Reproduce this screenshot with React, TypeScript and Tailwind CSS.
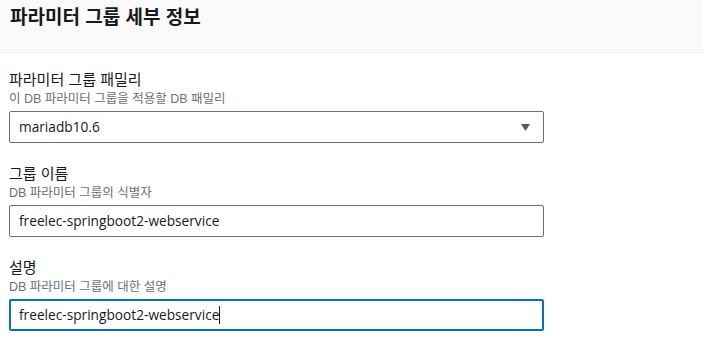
const font = "font-['Liberation_Sans','Noto_Sans_CJK_KR',sans-serif]";
const valueFont = "font-['Open_Sans','Noto_Sans_CJK_KR',sans-serif] text-[13.7px]";

function Field({
  label,
  hint,
  children,
}: {
  label: string;
  hint: string;
  children: React.ReactNode;
}) {
  return (
    <div className="flex flex-col">
      <div className="h-[22px] text-[15px] leading-[22px] text-[#16191f]">{label}</div>
      <div className="h-[16px] text-[12.5px] leading-[16px] text-[#687078]">{hint}</div>
      <div className="mt-[4px]">{children}</div>
    </div>
  );
}

export default function App() {
  return (
    <div className={`${font} h-[340px] w-[703px] overflow-hidden bg-white`}>
      <div className="h-[53px] border-b border-[#eaeded] bg-[#fafafa] px-[10px] pt-[4px]">
        <h2 className="text-[19px] font-bold leading-[28px] text-[#16191f]">파라미터 그룹 세부 정보</h2>
      </div>

      <div className="flex w-[544px] flex-col gap-[20px] pl-[9px] pt-[16px]">
        <Field label="파라미터 그룹 패밀리" hint="이 DB 파라미터 그룹을 적용할 DB 패밀리">
          <div className={`${valueFont} flex h-[32px] items-center justify-between rounded-[2px] border border-[#687078] pl-[9px] pr-[12px] text-[#16191f]`}>
            <span>mariadb10.6</span>
            <svg width="9" height="7" viewBox="0 0 9 7" className="mr-[1px]">
              <path d="M0 0 H9 L4.5 7 Z" fill="#545b64" />
            </svg>
          </div>
        </Field>

        <Field label="그룹 이름" hint="DB 파라미터 그룹의 식별자">
          <div className={`${valueFont} flex h-[32px] items-center rounded-[2px] border border-[#687078] pl-[9px] text-[#16191f]`}>
            freelec-springboot2-webservice
          </div>
        </Field>

        <Field label="설명" hint="DB 파라미터 그룹에 대한 설명">
          <div className={`${valueFont} flex h-[32px] items-center rounded-[2px] border-2 border-[#0073bb] pl-[8px] text-[#16191f]`}>
            <span>freelec-springboot2-webservice</span>
            <span className="h-[18px] w-px bg-[#16191f]" />
          </div>
        </Field>
      </div>
    </div>
  );
}
